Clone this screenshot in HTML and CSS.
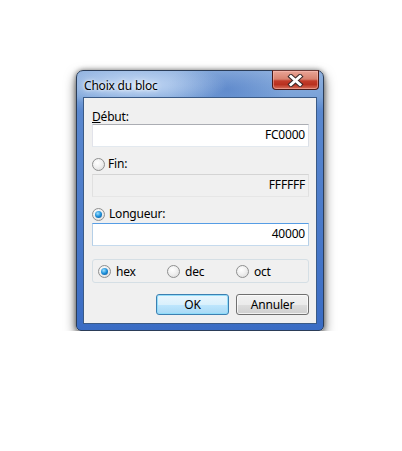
FILE: index.html
```html
<!DOCTYPE html>
<html>
    <head>
        <title>Choix du bloc</title>
        <link rel="stylesheet" href="styles.css">
    </head>
    <body>
    <div class="window">
        <div class="titlebar">
            <span class="title">Choix du bloc</span>
            <span class="close_btn">
                <svg width="17" height="13" viewBox="0 0 17 13">
                    <path d="M4 2.5 L13 10.5 M13 2.5 L4 10.5" stroke="#3b2a2a" stroke-width="5" stroke-linecap="square"/>
                    <path d="M4 2.5 L13 10.5 M13 2.5 L4 10.5" stroke="#ffffff" stroke-width="3" stroke-linecap="square"/>
                </svg>
            </span>
        </div>
        <div class="client">
            <div class="label_row start_row"><span><u>D</u>ébut:</span></div>
            <div class="field">FC0000</div>

            <div class="label_row fin_row"><span class="radio"></span><span>Fin:</span></div>
            <div class="field disabled field_fin">FFFFFF</div>

            <div class="label_row len_row"><span class="radio checked"></span><span>Longueur:</span></div>
            <div class="field focused field_len">40000</div>

            <div class="group_box">
                <div class="opt"><span class="radio checked"></span><span>hex</span></div>
                <div class="opt"><span class="radio"></span><span>dec</span></div>
                <div class="opt"><span class="radio"></span><span>oct</span></div>
            </div>

            <div class="buttons">
                <button type="button" class="btn btn_default">OK</button>
                <button type="button" class="btn">Annuler</button>
            </div>
        </div>
    </div>
    </body>
</html>
```

FILE: styles.css
```css
body {
	margin: 0;
	padding: 70px 0 0 76px;
	background: #ffffff;
	font-family: "Noto Sans", "Open Sans", sans-serif;
	font-size: 12px;
	letter-spacing: -0.2px;
	color: #000000;
}
.window {
	width: 248px;
	height: 261px;
	box-sizing: border-box;
	border: 1px solid #2b3d58;
	border-radius: 7px 7px 5px 5px;
	padding: 0 6px 6px 6px;
	background:
		radial-gradient(ellipse 90px 22px at 60px 14px, rgba(220, 235, 255, 0.75), rgba(220, 235, 255, 0) 100%),
		radial-gradient(ellipse 60px 30px at 150px 18px, rgba(40, 90, 180, 0.35), rgba(40, 90, 180, 0) 100%),
		linear-gradient(to bottom, #8eb0de 0, #7aa2d8 26px, #5a88cf 40px, #3a6cc4 100%);
	box-shadow: 0 5px 12px rgba(0, 0, 0, 0.6), 0 0 5px rgba(0, 0, 0, 0.45);
	display: flex;
	flex-direction: column;
}
.titlebar {
	height: 26px;
	display: flex;
	align-items: flex-start;
}
.title {
	padding: 7px 0 0 1px;
	line-height: 16px;
	text-shadow: 0 0 6px #ffffff, 0 0 3px #ffffff;
}
.close_btn {
	margin: -1px -2px 0 auto;
	width: 47px;
	height: 20px;
	box-sizing: border-box;
	border: 1px solid #4a1a18;
	border-top-color: #6b3a36;
	border-radius: 0 0 4px 4px;
	background: linear-gradient(to bottom, #e9a597 0, #d8826f 45%, #c23c2a 55%, #b9311f 75%, #d7715c 100%);
	box-shadow: inset 0 0 0 1px rgba(255, 200, 190, 0.45);
	display: flex;
	align-items: center;
	justify-content: center;
}
.client {
	flex: 1;
	border: 1px solid #3a5a86;
	background: #f0f0f0;
	padding: 11px 7px 0 8px;
	display: flex;
	flex-direction: column;
}
.label_row {
	height: 16px;
	line-height: 16px;
	display: flex;
	align-items: center;
	gap: 3px;
}
.len_row {
	gap: 4px;
}
.fin_row, .len_row {
	margin-top: 9px;
}
.start_row {
	margin-bottom: -1px;
}
.field {
	margin-top: 0;
	height: 23px;
	box-sizing: border-box;
	border: 1px solid;
	border-color: #abadb3 #dbdfe6 #e3e9ef #e2e3ea;
	background: #ffffff;
	text-align: right;
	line-height: 20px;
	padding-right: 3px;
}
.field_fin {
	margin-top: 2px;
}
.field_len {
	margin-top: 1px;
}
.disabled {
	background: #f0f0f0;
	border-color: #d4d4d4 #e0e0e0 #e6e6e6 #e0e0e0;
}
.focused {
	border-color: #569de5 #b5cfe7 #c5daed #b5cfe7;
}
.radio {
	width: 13px;
	height: 13px;
	box-sizing: border-box;
	border-radius: 50%;
	border: 1px solid #8e8f8f;
	background: radial-gradient(circle at 40% 35%, #ffffff 0, #f0f0f0 45%, #d7d7d7 100%);
	display: flex;
	align-items: center;
	justify-content: center;
	flex: none;
}
.radio.checked::after {
	content: "";
	width: 7px;
	height: 7px;
	border-radius: 50%;
	background: radial-gradient(circle at 40% 35%, #9fe0ff 0, #1b8ed8 50%, #0b4a8a 100%);
}
.group_box {
	margin-top: 13px;
	height: 24px;
	box-sizing: border-box;
	border: 1px solid #d5dfe5;
	border-radius: 3px;
	padding-left: 5px;
	display: flex;
	align-items: center;
}
.opt {
	width: 69px;
	display: flex;
	align-items: center;
	gap: 5px;
}
.buttons {
	margin-top: 11px;
	display: flex;
	justify-content: flex-end;
	gap: 7px;
}
.btn {
	width: 73px;
	height: 21px;
	box-sizing: border-box;
	border: 1px solid #707070;
	border-radius: 3px;
	background: linear-gradient(to bottom, #f2f2f2 0, #ebebeb 50%, #dddddd 51%, #cfcfcf 100%);
	box-shadow: inset 0 0 0 1px rgba(255, 255, 255, 0.7);
	font-family: inherit;
	font-size: 12px;
	letter-spacing: -0.2px;
	color: #000000;
	padding: 0;
	line-height: 18px;
}
.btn_default {
	border-color: #3c7fb1;
	background: linear-gradient(to bottom, #eaf6fd 0, #d9f0fc 50%, #bee6fd 51%, #a7d9f5 100%);
	box-shadow: inset 0 0 0 1px rgba(140, 220, 250, 0.9);
}
```
